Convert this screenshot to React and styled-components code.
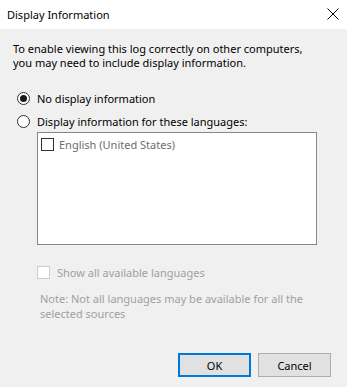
import React from "react";
import styled, { createGlobalStyle } from "styled-components";

const GlobalStyle = createGlobalStyle`
  html, body {
    margin: 0;
    padding: 0;
    background: #f0f0f0;
  }
  body {
    font-family: "Noto Sans", "Open Sans", Arial, sans-serif;
    font-size: 11px;
    color: #000;
  }
`;

export default function App() {
  return (
    <>
      <GlobalStyle />
      <Dialog>
        <TitleBar>
          <Title>Display Information</Title>
          <CloseButton aria-label="Close">
            <svg width="12" height="12" viewBox="0 0 12 12">
              <path d="M0.5 0.5 L11.5 11.5 M11.5 0.5 L0.5 11.5" stroke="#000" strokeWidth="1" fill="none" />
            </svg>
          </CloseButton>
        </TitleBar>
        <Body>
          <Intro>
            To enable viewing this log correctly on other computers,
            <br />
            you may need to include display information.
          </Intro>
          <RadioGroup>
            <RadioRow>
              <Radio checked />
              <span>No display information</span>
            </RadioRow>
            <RadioRow>
              <Radio />
              <span>Display information for these languages:</span>
            </RadioRow>
          </RadioGroup>
          <ListBox>
            <ListItem>
              <Check />
              <span>English (United States)</span>
            </ListItem>
          </ListBox>
          <ShowAllRow>
            <Check disabled />
            <span>Show all available languages</span>
          </ShowAllRow>
          <Note>
            Note: Not all languages may be available for all the
            <br />
            selected sources
          </Note>
          <ButtonRow>
            <Button primary>OK</Button>
            <Button>Cancel</Button>
          </ButtonRow>
        </Body>
      </Dialog>
    </>
  );
}

const Dialog = styled.div`
  width: 347px;
  height: 387px;
  display: flex;
  flex-direction: column;
  background: #f0f0f0;
  overflow: hidden;
`;

const TitleBar = styled.div`
  height: 29px;
  flex: none;
  display: flex;
  align-items: center;
  justify-content: space-between;
  padding: 0 8px 0 7px;
  background: #fff;
`;

const Title = styled.div`
  font-size: 11px;
  color: #000;
`;

const CloseButton = styled.div`
  width: 12px;
  height: 12px;
  display: flex;
  margin-top: -1px;
`;

const Body = styled.div`
  flex: 1;
  display: flex;
  flex-direction: column;
  padding: 13px 16px 10px 13px;
`;

const Intro = styled.div`
  line-height: 14px;
`;

const RadioGroup = styled.div`
  display: flex;
  flex-direction: column;
  gap: 7px;
  margin-top: 20px;
`;

const RadioRow = styled.div`
  height: 16px;
  display: flex;
  align-items: center;
  gap: 7px;
  padding-left: 4px;
`;

const Radio = styled.span`
  width: 13px;
  height: 13px;
  box-sizing: border-box;
  border-radius: 50%;
  border: 1px solid #333;
  background: #fff;
  position: relative;
  flex: none;
  &::after {
    content: "";
    display: ${(p) => (p.checked ? "block" : "none")};
    position: absolute;
    left: 2px;
    top: 2px;
    width: 7px;
    height: 7px;
    border-radius: 50%;
    background: #1a1a1a;
  }
`;

const ListBox = styled.div`
  margin: 3px 0 0 24px;
  width: 280px;
  height: 113px;
  box-sizing: border-box;
  border: 1px solid #828790;
  background: #fff;
  padding: 4px 3px;
`;

const ListItem = styled.div`
  display: flex;
  align-items: center;
  gap: 5px;
  height: 14px;
  color: #6d6d6d;
`;

const Check = styled.span`
  width: 13px;
  height: 13px;
  box-sizing: border-box;
  flex: none;
  border: 1px solid ${(p) => (p.disabled ? "#cccccc" : "#333333")};
  background: #fff;
`;

const ShowAllRow = styled.div`
  display: flex;
  align-items: center;
  gap: 7px;
  height: 14px;
  margin: 20px 0 0 24px;
  color: #a0a0a0;
`;

const Note = styled.div`
  margin: 12px 0 0 27px;
  line-height: 15px;
  color: #a0a0a0;
`;

const ButtonRow = styled.div`
  margin-top: auto;
  display: flex;
  justify-content: flex-end;
  gap: 7px;
`;

const Button = styled.button`
  width: 73px;
  height: 24px;
  box-sizing: border-box;
  background: #e1e1e1;
  border: ${(p) => (p.primary ? "2px solid #0078d7" : "1px solid #adadad")};
  font-family: inherit;
  font-size: 11px;
  color: #000;
  padding: 0;
`;
